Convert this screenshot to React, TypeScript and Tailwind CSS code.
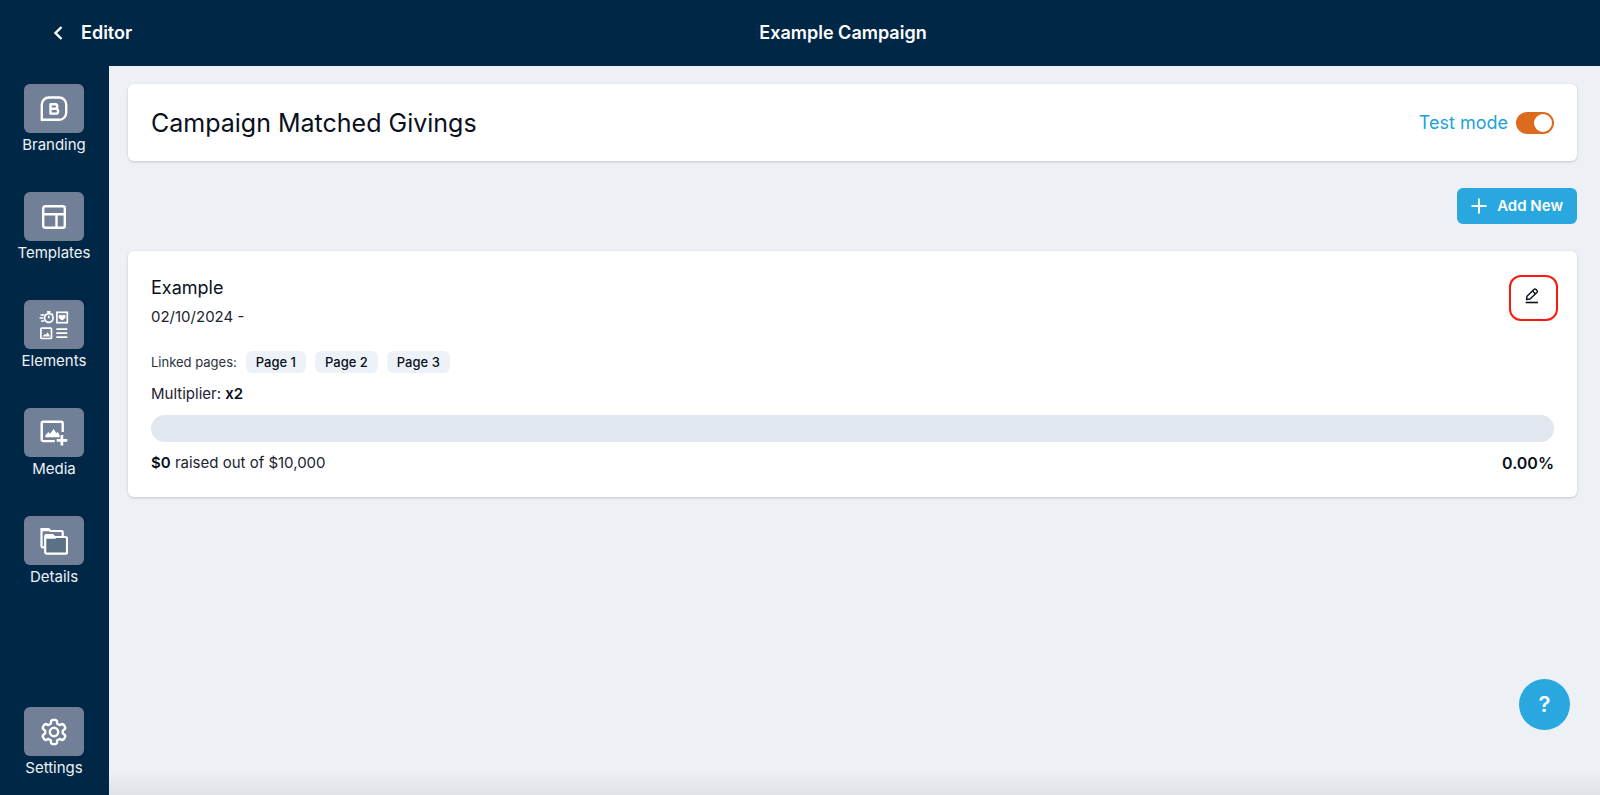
import type { ReactNode } from "react";

function BrandingIcon() {
  return (
    <svg width="28" height="26" viewBox="0 0 28 26" fill="none" stroke="currentColor" strokeWidth="2.4">
      <path d="M1.8 24V8.5a7 7 0 0 1 7-7h10.4a7 7 0 0 1 7 7v8.3a7 7 0 0 1-7 7H1.8Z" strokeLinejoin="round" />
      <path d="M10.5 8.300h4.600a2 2 0 0 1 0 4.400h-4.600Zm0 4.400h5.200a2.200 2.200 0 0 1 0 4.900h-5.200Z" strokeLinejoin="round" strokeWidth="2.4" />
    </svg>
  );
}

function TemplatesIcon() {
  return (
    <svg width="24" height="24" viewBox="0 0 24 24" fill="none" stroke="currentColor" strokeWidth="2.4">
      <rect x="1.2" y="1.2" width="21.6" height="21.6" rx="2" />
      <path d="M1.2 9.3h21.600M14.5 9.3v13.500" />
    </svg>
  );
}

function ElementsIcon() {
  return (
    <svg width="30" height="30" viewBox="0 0 30 30" fill="none" stroke="currentColor" strokeWidth="1.7">
      <circle cx="9.800" cy="8" r="4.300" />
      <path d="M8 1.800h3.600M9.800 1.800v2M13 4.600l1-1M9.800 5.800v2.400M1.500 5h4M.6 8h3.800M2 11h3.500" />
      <rect x="17.900" y="2.300" width="10.400" height="10.400" />
      <path d="M23.100 10.600c-2.200-1.600-3.500-2.700-3.500-4.200 0-1.900 2.600-2.200 3.500-.7.900-1.500 3.500-1.200 3.500.7 0 1.500-1.300 2.600-3.500 4.200Z" fill="currentColor" stroke="none" />
      <rect x="1.900" y="18.100" width="10.600" height="10.400" rx=".8" />
      <path d="M3.500 26.400l2.200-2.400 1.200.8 1.700-2.500 2.600 4.100Z" fill="currentColor" stroke="none" />
      <path d="M17.300 19.200h11M17.300 23.200h11M17.300 27.200h11" />
    </svg>
  );
}

function MediaIcon() {
  return (
    <svg width="28" height="26" viewBox="0 0 28 26" fill="none" stroke="currentColor" strokeWidth="2.4">
      <path d="M22.700 12V3.200a1.500 1.500 0 0 0-1.500-1.500H3.200a1.500 1.500 0 0 0-1.500 1.500v16.400a1.500 1.500 0 0 0 1.500 1.500h11.500" />
      <path d="M21.900 15v10.500M16.700 20.300h10.600" strokeWidth="2.7" />
      <path d="M5.300 17.300v-1.800l3-3.500 1.700 1.700L13.700 9l2.700 4.200 1.200-1.400 2 3.500v2Z" fill="currentColor" stroke="none" />
    </svg>
  );
}

function DetailsIcon() {
  return (
    <svg width="28" height="28" viewBox="0 0 28 28" fill="none" stroke="currentColor" strokeWidth="2.2">
      <path d="M5 20.300H2.700a1.200 1.200 0 0 1-1.200-1.200V2h7l2 2h11.200a1 1 0 0 1 1 1v4" />
      <path d="M1 1.200h7.900l2.300 3H1Z" fill="currentColor" stroke="none" />
      <path d="M5.200 10V9.300a1.300 1.300 0 0 1 1.300-1.300h6l2 2h11.200a1.300 1.300 0 0 1 1.300 1.300v14a1.300 1.300 0 0 1-1.300 1.300H6.500a1.300 1.300 0 0 1-1.300-1.300Z" fill="#5a7186" />
      <path d="M5 7.500h7.800L16 11.700H5Z" fill="currentColor" stroke="none" />
    </svg>
  );
}

// Six teeth, each given as [radius, angle from the tooth's axis in degrees].
const tooth = [[8.9, -21], [11.6, -14], [12.2, -6], [12.2, 6], [11.6, 14], [8.9, 21]];
const gearPoints = [0, 60, 120, 180, 240, 300]
  .flatMap((axis) =>
    tooth.map(([radius, offset]) => {
      const angle = ((axis + offset) * Math.PI) / 180;
      return `${(15 + radius * Math.sin(angle)).toFixed(2)},${(15 - radius * Math.cos(angle)).toFixed(2)}`;
    }),
  )
  .join(" ");

function SettingsIcon() {
  return (
    <svg width="30" height="30" viewBox="0 0 30 30" fill="none" stroke="currentColor" strokeWidth="2.4" strokeLinejoin="round">
      <polygon points={gearPoints} />
      <circle cx="15" cy="15" r="4.2" />
    </svg>
  );
}

function PencilIcon() {
  return (
    <svg width="14" height="16" viewBox="0 0 14 16" fill="none" stroke="currentColor" strokeWidth="1.4" strokeLinejoin="round">
      <path d="M1.500 11.500l.5-3.300 6.900-6.600a1.500 1.500 0 0 1 2.100 0l.9.900a1.500 1.500 0 0 1 0 2.100L5 11Z" />
      <path d="M7.500 3l3 3" />
      <path d="M.7 14.500h12.300" strokeWidth="1.6" />
    </svg>
  );
}

function NavItem({ label, children }: { label: string; children: ReactNode }) {
  return (
    <a href="#" className="flex flex-col items-center text-[15px] leading-6 text-[#eef1f5]">
      <span className="flex h-[49px] w-15 items-center justify-center rounded-md bg-[#718096] text-white">{children}</span>
      {label}
    </a>
  );
}

export default function App() {
  return (
    <div className="flex min-h-screen flex-col bg-[#edf0f5] font-['Inter','Liberation_Sans',sans-serif] text-[15px] text-[#090f1c]">
      <header className="grid h-[66px] grid-cols-[1fr_auto_1fr] items-center bg-[#002846] text-white">
        <a href="#" className="ml-[53px] flex items-center gap-[18px] justify-self-start text-lg font-semibold">
          <svg width="10" height="14" viewBox="0 0 10 14" fill="none" stroke="currentColor" strokeWidth="2.4">
            <path d="M8.500 1L2.500 7l6 6" />
          </svg>
          Editor
        </a>
        <p className="ml-[86px] text-lg font-semibold">Example Campaign</p>
      </header>

      <div className="flex grow">
        <nav aria-label="Editor" className="flex w-[109px] shrink-0 flex-col items-center justify-between bg-[#002846] pt-[18px] pr-px pb-[15px]">
          <div className="flex flex-col gap-[35px]">
            <NavItem label="Branding"><BrandingIcon /></NavItem>
            <NavItem label="Templates"><TemplatesIcon /></NavItem>
            <NavItem label="Elements"><ElementsIcon /></NavItem>
            <NavItem label="Media"><MediaIcon /></NavItem>
            <NavItem label="Details"><DetailsIcon /></NavItem>
          </div>
          <NavItem label="Settings"><SettingsIcon /></NavItem>
        </nav>

        <main className="flex min-w-0 grow flex-col bg-linear-to-t from-[#dfe2e6] to-[#edf0f5] to-[24px] pt-[18px] pr-[23px] pl-[19px]">
          <section className="flex items-center justify-between rounded-md bg-white px-[23px] pt-[19px] pb-[18px] shadow-[0_1px_3px_rgba(0,0,0,0.18)]">
            <h1 className="text-[25px] leading-10">Campaign Matched Givings</h1>
            <label className="flex items-center gap-2 text-lg text-[#20a2da]">
              Test mode
              <input
                type="checkbox"
                role="switch"
                defaultChecked
                className="flex h-[22px] w-[38px] appearance-none items-center rounded-full bg-slate-300 px-0.5 before:size-[18px] before:rounded-full before:bg-white checked:justify-end checked:bg-[#dc6b1e]"
              />
            </label>
          </section>

          <button type="button" className="mt-[27px] flex h-9 items-center gap-2.5 self-end rounded-md bg-[#29a8e0] px-3.5 font-semibold text-white">
            <svg width="16" height="16" viewBox="0 0 16 16" stroke="currentColor" strokeWidth="2">
              <path d="M8 .5v15M.5 8h15" />
            </svg>
            Add New
          </button>

          <section className="mt-[27px] rounded-md bg-white px-[23px] pt-6 pb-[22px] shadow-[0_1px_3px_rgba(0,0,0,0.18)]">
            <div className="flex items-start justify-between">
              <div>
                <h2 className="text-lg leading-[26px]">Example</h2>
                <p className="mt-1 leading-6 text-[#1b2230]">02/10/2024 -</p>
              </div>
              <button type="button" aria-label="Edit Example" className="-mr-1 flex h-[46px] w-[49px] items-center justify-center rounded-xl border-2 border-[#fb1a10] pr-1 pb-1">
                <PencilIcon />
              </button>
            </div>

            <div className="mt-[22px] flex items-center gap-[9px] text-[13px] leading-[22px]">
              <span className="text-[#2a3140]">Linked pages:</span>
              <span className="rounded-md bg-[#edf2f8] px-2.5 font-medium">Page 1</span>
              <span className="rounded-md bg-[#edf2f8] px-2.5 font-medium">Page 2</span>
              <span className="rounded-md bg-[#edf2f8] px-2.5 font-medium">Page 3</span>
            </div>

            <p className="mt-[9px] leading-6 text-[#1b2230]">
              Multiplier: <strong className="font-semibold text-[#090f1c]">x2</strong>
            </p>
            <div role="progressbar" aria-label="Amount raised" aria-valuenow={0} aria-valuemin={0} aria-valuemax={100} className="mt-[9px] h-[27px] rounded-full bg-[#e1e7ef]" />
            <div className="mt-[9px] flex justify-between leading-6">
              <p className="text-[#1b2230]">
                <strong className="font-semibold text-[#090f1c]">$0</strong> raised out of $10,000
              </p>
              <p className="text-base font-semibold">0.00%</p>
            </div>
          </section>
        </main>
      </div>

      <button type="button" aria-label="Help" className="fixed right-[30px] bottom-[65px] size-[51px] rounded-full bg-[#29a8e0] text-[22px] font-semibold text-white">
        ?
      </button>
    </div>
  );
}
